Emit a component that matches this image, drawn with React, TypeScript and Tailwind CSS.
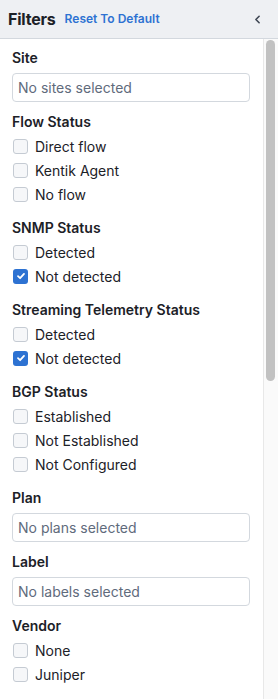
import { ChevronLeft } from "lucide-react";

type Section =
  | { kind: "select"; title: string; placeholder: string }
  | { kind: "checks"; title: string; options: { label: string; checked?: boolean }[] };

const sections: Section[] = [
  { kind: "select", title: "Site", placeholder: "No sites selected" },
  {
    kind: "checks",
    title: "Flow Status",
    options: [{ label: "Direct flow" }, { label: "Kentik Agent" }, { label: "No flow" }],
  },
  {
    kind: "checks",
    title: "SNMP Status",
    options: [{ label: "Detected" }, { label: "Not detected", checked: true }],
  },
  {
    kind: "checks",
    title: "Streaming Telemetry Status",
    options: [{ label: "Detected" }, { label: "Not detected", checked: true }],
  },
  {
    kind: "checks",
    title: "BGP Status",
    options: [{ label: "Established" }, { label: "Not Established" }, { label: "Not Configured" }],
  },
  { kind: "select", title: "Plan", placeholder: "No plans selected" },
  { kind: "select", title: "Label", placeholder: "No labels selected" },
  {
    kind: "checks",
    title: "Vendor",
    options: [{ label: "None" }, { label: "Juniper" }],
  },
];

function Checkbox({ checked }: { checked?: boolean }) {
  if (checked) {
    return (
      <span className="flex h-[15px] w-[15px] shrink-0 items-center justify-center rounded-[3px] bg-[#2d72d2]">
        <svg width="10" height="10" viewBox="0 0 10 10" fill="none">
          <path d="M2 5.2 L4.1 7.2 L8 2.9" stroke="white" strokeWidth="1.8" strokeLinecap="round" strokeLinejoin="round" />
        </svg>
      </span>
    );
  }
  return <span className="h-[15px] w-[15px] shrink-0 rounded-[3px] border border-[#c5cbd3] bg-[#f6f7f9]" />;
}

export default function App() {
  return (
    <div
      className="flex h-[699px] w-[278px] flex-col overflow-hidden bg-white text-[#1c2127]"
      style={{ fontFamily: "Inter, 'Noto Sans', sans-serif" }}
    >
      {/* Header */}
      <div className="flex h-[39px] shrink-0 items-center border-b border-[#d3d8de] bg-[#eef0f3] pl-2 pr-[14px]">
        <span className="text-[16px] font-bold tracking-[-0.2px] text-[#1c2127]">Filters</span>
        <span className="ml-[9px] text-[12px] font-semibold text-[#2d72d2]">Reset To Default</span>
        <ChevronLeft className="ml-auto text-[#404854]" size={13} strokeWidth={3} />
      </div>

      <div className="flex min-h-0 flex-1">
        {/* Content */}
        <div className="flex-1 overflow-hidden pl-3 pr-[13px] pt-[9px]">
          {sections.map((s) => (
            <div key={s.title} className={s.kind === "select" ? "mb-[10px]" : "mb-[12px]"}>
              <div className="text-[14px] font-semibold leading-[20px]">{s.title}</div>
              {s.kind === "select" ? (
                <div className="mt-[5px] flex h-[29px] items-center rounded-[4px] border border-[#d3d8de] px-[5px] text-[14px] text-[#5f6b7c]">
                  {s.placeholder}
                </div>
              ) : (
                <div className="mt-[2px] flex flex-col">
                  {s.options.map((o) => (
                    <div key={o.label} className="flex h-[24px] items-center gap-[7px] pl-[1px] text-[14px]">
                      <Checkbox checked={o.checked} />
                      <span>{o.label}</span>
                    </div>
                  ))}
                </div>
              )}
            </div>
          ))}
        </div>

        {/* Scrollbar */}
        <div className="w-[15px] shrink-0 border-l border-[#e8e8e8] bg-[#fafafa] pl-[2px] pt-[1px]">
          <div className="h-[341px] w-[9px] rounded-full bg-[#c1c1c1]" />
        </div>
      </div>
    </div>
  );
}
